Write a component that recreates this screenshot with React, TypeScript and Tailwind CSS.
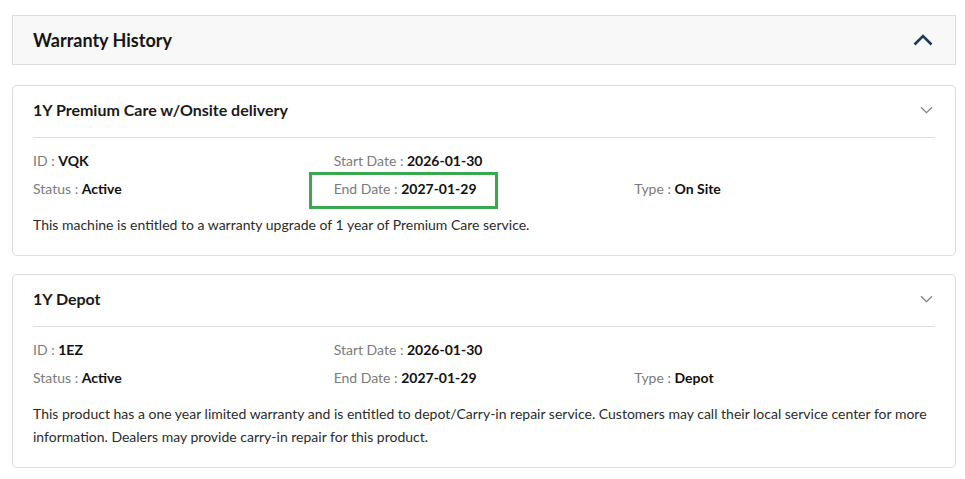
import React from "react";

interface Warranty {
  title: string;
  id: string;
  status: string;
  start: string;
  end: string;
  type: string;
  description: string;
  highlightEnd?: boolean;
}

const warranties: Warranty[] = [
  {
    title: "1Y Premium Care w/Onsite delivery",
    id: "VQK",
    status: "Active",
    start: "2026-01-30",
    end: "2027-01-29",
    type: "On Site",
    description:
      "This machine is entitled to a warranty upgrade of 1 year of Premium Care service.",
    highlightEnd: true,
  },
  {
    title: "1Y Depot",
    id: "1EZ",
    status: "Active",
    start: "2026-01-30",
    end: "2027-01-29",
    type: "Depot",
    description:
      "This product has a one year limited warranty and is entitled to depot/Carry-in repair service. Customers may call their local service center for more information. Dealers may provide carry-in repair for this product.",
  },
];

const Field: React.FC<{ label: string; value: string }> = ({ label, value }) => (
  <span className="whitespace-nowrap">
    <span className="text-[#7b7b7b]">{label} : </span>
    <span className="font-bold text-[#111]">{value}</span>
  </span>
);

const ChevronDown = () => (
  <svg width="13" height="8" viewBox="0 0 13 8" fill="none">
    <path d="M1 1.2 L6.5 6.6 L12 1.2" stroke="#7a7f88" strokeWidth="1.2" />
  </svg>
);

const WarrantyCard: React.FC<{ w: Warranty }> = ({ w }) => (
  <div className="rounded-[5px] border border-[#dedede] bg-white px-5">
    <div className="flex items-center justify-between pt-[13px] pb-[16px] border-b border-[#dcdcdc]">
      <h3 className="text-[16px] leading-[22px] font-bold text-[#1a1a1a]">{w.title}</h3>
      <div className="mr-[2px]">
        <ChevronDown />
      </div>
    </div>
    <div className="mt-[13px] grid grid-cols-3 gap-y-[8px] text-[14px] leading-[20px]">
      <div>
        <Field label="ID" value={w.id} />
      </div>
      <div>
        <Field label="Start Date" value={w.start} />
      </div>
      <div />
      <div>
        <Field label="Status" value={w.status} />
      </div>
      <div className="relative">
        <Field label="End Date" value={w.end} />
        {w.highlightEnd && (
          <div className="absolute -left-[25px] -top-[7px] w-[189px] h-[37px] border-[3px] border-[#3aa84f]" />
        )}
      </div>
      <div>
        <Field label="Type" value={w.type} />
      </div>
    </div>
    <p className="mt-[14px] pb-[19px] text-[14px] leading-[23px] text-[#2b2b2b]">{w.description}</p>
  </div>
);

export default function App() {
  return (
    <div
      className="bg-white pl-3 pr-[9px] pt-[15px] pb-3"
      style={{ fontFamily: "Lato, 'Open Sans', sans-serif" }}
    >
      <div className="flex h-[50px] items-center justify-between border border-[#dcdcdc] bg-[#f8f8f8] pl-5 pr-[22px]">
        <h2 className="text-[18px] font-bold text-[#151515]">Warranty History</h2>
        <svg width="20" height="12" viewBox="0 0 20 12" fill="none">
          <path d="M1.5 10.5 L10 2 L18.5 10.5" stroke="#1d3a5c" strokeWidth="2.6" />
        </svg>
      </div>
      <div className="mt-5 flex flex-col gap-[18px]">
        {warranties.map((w) => (
          <WarrantyCard key={w.title} w={w} />
        ))}
      </div>
    </div>
  );
}
